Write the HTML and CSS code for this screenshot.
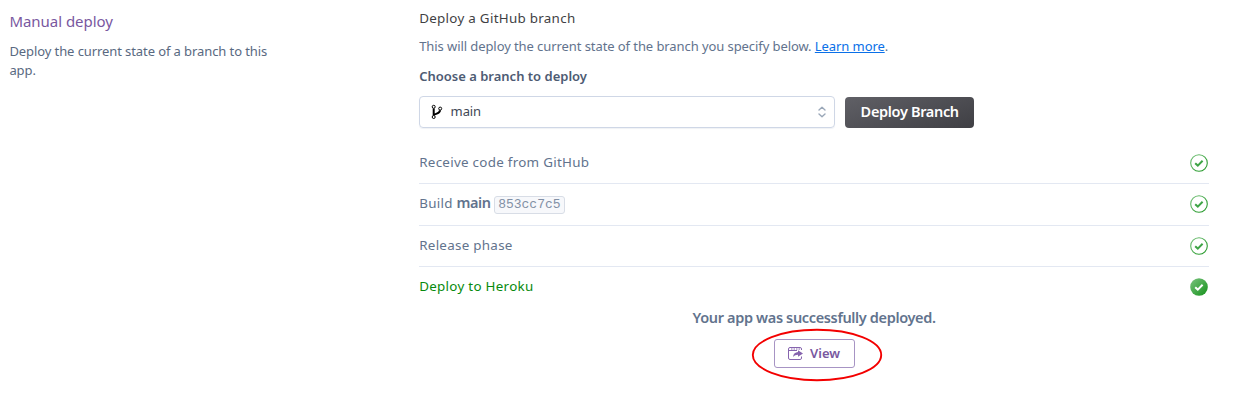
FILE: index.html
```html
<!DOCTYPE html>
<html lang="en">
<head>
<meta charset="utf-8">
<title>Manual deploy</title>
<link rel="stylesheet" href="styles.css">
</head>
<body>
<svg class="defs" width="0" height="0" aria-hidden="true">
  <defs>
    <linearGradient id="done" x1="0" y1="0" x2="1" y2="1"><stop offset="0" stop-color="#7bc47f"/><stop offset="1" stop-color="#15911a"/></linearGradient>
    <symbol id="check" viewBox="0 0 18 18"><circle cx="9" cy="9" r="8.3" fill="none" stroke="url(#done)" stroke-width="1.1"/><path d="M5.2 9.2 7.8 11.6 12.6 6.8" fill="none" stroke="#3fa447" stroke-width="2"/></symbol>
  </defs>
</svg>
<main class="page">
  <aside class="intro">
    <h2 class="intro-title">Manual deploy</h2>
    <p class="intro-text">Deploy the current state of a branch to this app.</p>
  </aside>
  <section class="deploy">
    <h3 class="deploy-title">Deploy a GitHub branch</h3>
    <p class="deploy-text">This will deploy the current state of the branch you specify below. <a class="link" href="#">Learn more</a>.</p>
    <div class="label">Choose a branch to deploy</div>
    <div class="controls">
      <div class="select">
        <svg class="branch" width="12" height="16" viewBox="0 0 12 16" fill="none" stroke="#000"><circle cx="2.7" cy="2.8" r="1.5"/><circle cx="9.2" cy="4.6" r="1.5"/><circle cx="2.7" cy="13" r="1.5"/><path d="M2.7 4.4V11.4M2.7 11C4.2 9.4 8.9 10 9 6.2" stroke-width="2"/></svg>
        <span class="value">main</span>
        <svg class="arrows" width="8" height="12" viewBox="0 0 8 12" fill="none" stroke="#9aa7b8" stroke-width="1.4" stroke-linecap="round" stroke-linejoin="round"><path d="M1 4 4 1.3 7 4M1 8 4 10.7 7 8"/></svg>
      </div>
      <button class="primary">Deploy Branch</button>
    </div>
    <ul class="steps">
      <li class="step"><span class="step-name">Receive code from GitHub</span><svg class="status" width="18" height="18"><use href="#check"/></svg></li>
      <li class="step build"><span class="step-name">Build <strong class="ref">main</strong> <code class="sha">853cc7c5</code></span><svg class="status" width="18" height="18"><use href="#check"/></svg></li>
      <li class="step"><span class="step-name">Release phase</span><svg class="status" width="18" height="18"><use href="#check"/></svg></li>
      <li class="step final"><span class="step-name">Deploy to Heroku</span><svg class="status" width="18" height="18" viewBox="0 0 18 18"><circle cx="9" cy="9" r="8.8" fill="url(#done)"/><path d="M5.2 9.2 7.8 11.6 12.6 6.8" fill="none" stroke="#fff" stroke-width="2"/></svg></li>
    </ul>
    <div class="result">
      <p class="message">Your app was successfully deployed.</p>
      <div class="view-wrap">
        <button class="view"><svg width="15" height="13" viewBox="0 0 15 13" fill="none" stroke="#8664ae"><path d="M13.5 3V2Q13.5.5 12.1.5H2Q.5.5.5 2V11Q.5 12.5 2 12.5H12.1Q13.5 12.5 13.5 11V9.5M1 3.5H9"/><path d="M3 2H12" stroke-dasharray="1.5 1"/><path d="M5 10C5.4 6.7 7.4 5.3 10 5.1V3.2L15 6.5 10 9.8V7.8C8 7.8 6.4 8.5 5 10Z" fill="#8664ae" stroke="none"/></svg>View</button>
        <svg class="highlight" width="132" height="54" viewBox="0 0 132 54"><ellipse cx="66" cy="27" rx="64.2" ry="25.2" fill="none" stroke="#f30000" stroke-width="1.9"/></svg>
      </div>
    </div>
  </section>
</main>
</body>
</html>
```
FILE: styles.css
```css
* { box-sizing: border-box; }
body { margin: 0; background: #fff; font: 13px/20px "Noto Sans", sans-serif; color: #62738d; }
h2, h3, p, ul { margin: 0; padding: 0; font-weight: 400; }
.defs { position: absolute; }
.page { display: flex; height: 412px; padding-left: 9.4px; overflow: hidden; }
.intro { width: 409.8px; padding-top: 10px; }
.intro-title { font-size: 15px; line-height: 22px; letter-spacing: -.03px; color: #79589f; }
.intro-text { width: 270px; margin-top: 10px; line-height: 19px; letter-spacing: -.09px; color: #596981; }
.deploy { width: 789.8px; padding-top: 8px; }
.deploy-title { font-size: 13.4px; line-height: 20px; letter-spacing: .28px; color: #3f3f44; }
.deploy-text { margin-top: 8px; letter-spacing: -.08px; }
.link { color: #0a70e8; text-decoration: underline; }
.label { margin-top: 10px; font-weight: 600; color: #4d5b73; }
.controls { display: flex; align-items: center; gap: 10px; margin-top: 10px; height: 32px; }
.select { display: flex; align-items: center; width: 416px; height: 32px; padding: 0 8px 0 11px; border: 1px solid #cfd7e6; border-radius: 4px; box-shadow: 0 1px 1px #f0f2f6; }
.value { flex: 1; margin: -2px 0 0 7.4px; letter-spacing: -.1px; color: #3f4756; }
.primary { width: 129px; height: 31px; margin-top: 1px; padding: 0 0 3px; border: 0; border-radius: 4px; background: linear-gradient(160deg, #606066, #3f3f44); color: #fff; font: 600 14.5px/20px "Noto Sans", sans-serif; letter-spacing: -.33px; }
.steps { margin-top: 14px; list-style: none; }
.step { display: flex; align-items: center; justify-content: space-between; height: 42px; padding: 1px 1px 0 0; border-bottom: 1px solid #e3e8f2; font-size: 13.4px; letter-spacing: .28px; }
.step + .step { height: 41px; padding-top: 0; }
.step + .build { height: 42px; padding-bottom: 1px; }
.step.final { border: 0; padding-bottom: 1px; color: #078a0d; }
.step-name { margin-top: -2px; white-space: nowrap; }
.build .step-name { margin-top: -3px; }
.ref { font-size: 14.5px; font-weight: 600; letter-spacing: -.4px; }
.sha { display: inline-block; height: 18px; padding: 0 3.3px; border: 1px solid #d8dde6; border-radius: 3px; background: #f7f8fb; font: 13px/16px "Liberation Mono", monospace; letter-spacing: 0; margin-left: -.6px; color: #8290a5; }
.result { display: flex; flex-direction: column; align-items: center; }
.message { margin-top: -1px; font-size: 14.5px; font-weight: 600; letter-spacing: -.35px; }
.view-wrap { position: relative; margin-top: 12px; height: 29px; }
.view { display: flex; align-items: center; justify-content: center; gap: 7px; width: 81px; height: 29px; padding: 0 0 1px; border: 1px solid #a794c4; border-radius: 3px; background: #fff; color: #79589f; font: 600 13px/20px "Noto Sans", sans-serif; }
.highlight { position: absolute; left: -23px; top: -11px; pointer-events: none; }
```
